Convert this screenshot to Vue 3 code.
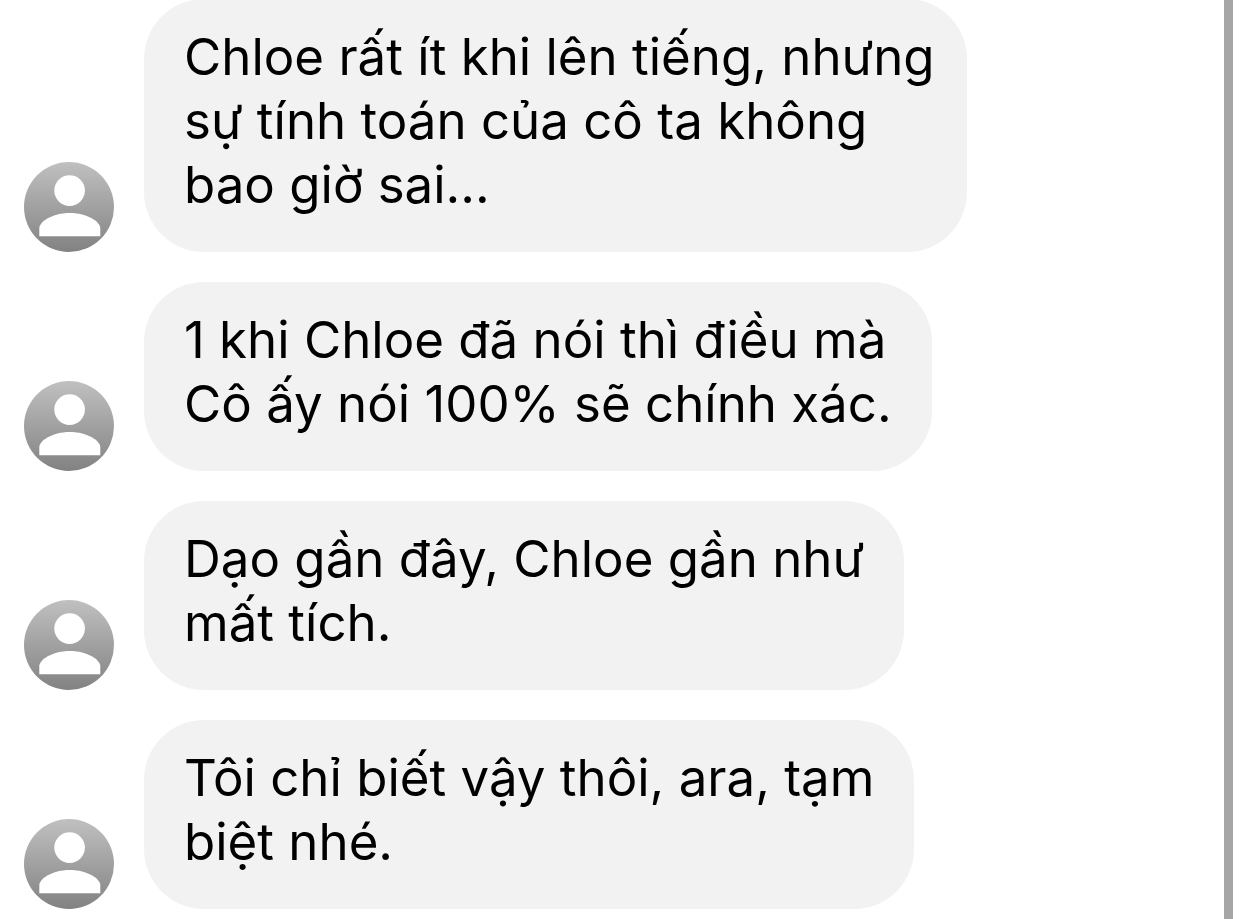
<script setup>
const messages = [
  { id: 1, lines: ['Chloe rất ít khi lên tiếng, nhưng', 'sự tính toán của cô ta không', 'bao giờ sai...'] },
  { id: 2, lines: ['1 khi Chloe đã nói thì điều mà', 'Cô ấy nói 100% sẽ chính xác.'] },
  { id: 3, lines: ['Dạo gần đây, Chloe gần như', 'mất tích.'] },
  { id: 4, lines: ['Tôi chỉ biết vậy thôi, ara, tạm', 'biệt nhé.'] },
]
</script>

<template>
  <main class="chat">
    <section class="thread">
      <article v-for="message in messages" :key="message.id" class="message">
        <svg class="avatar" viewBox="0 0 90 90" aria-hidden="true">
          <defs>
            <linearGradient :id="`shade-${message.id}`" x1="0" y1="0" x2="0" y2="1">
              <stop offset="0" stop-color="#c0c0c0" />
              <stop offset="1" stop-color="#828282" />
            </linearGradient>
          </defs>
          <circle cx="45" cy="45" r="45" :fill="`url(#shade-${message.id})`" />
          <circle cx="45.6" cy="28.6" r="15.3" fill="#fff" />
          <path d="M15.3 74.3V66C15.3 60 28 51 45.8 51S76.3 60 76.3 66V74.3Z" fill="#fff" />
        </svg>
        <p class="bubble">
          <span v-for="line in message.lines" :key="line" class="line">{{ line }}</span>
        </p>
      </article>
    </section>
    <div class="edge"></div>
  </main>
</template>

<style>
body {
  background: #fff;
}
</style>

<style scoped>
.chat {
  display: flex;
  min-height: 100vh;
  box-sizing: border-box;
  padding-right: 9px;
  overflow: hidden;
}
.thread {
  display: flex;
  flex: 1;
  flex-direction: column;
  gap: 30px;
  margin-top: -1px;
  padding: 0 24px 10px;
}
.message {
  display: flex;
  align-items: flex-end;
  gap: 30px;
}
.avatar {
  display: block;
  flex: none;
  width: 90px;
  height: 90px;
}
.bubble {
  margin: 0;
  box-sizing: border-box;
  max-width: 70%;
  padding: 26px 40px 35px;
  border-radius: 60px;
  background: #f2f2f2;
  color: #000;
  font-family: Inter, "Liberation Sans", sans-serif;
  font-size: 51px;
  line-height: 64px;
}
.line {
  display: block;
  white-space: nowrap;
}
.edge {
  flex: none;
  width: 9px;
  background: #a6a6a6;
}
</style>
